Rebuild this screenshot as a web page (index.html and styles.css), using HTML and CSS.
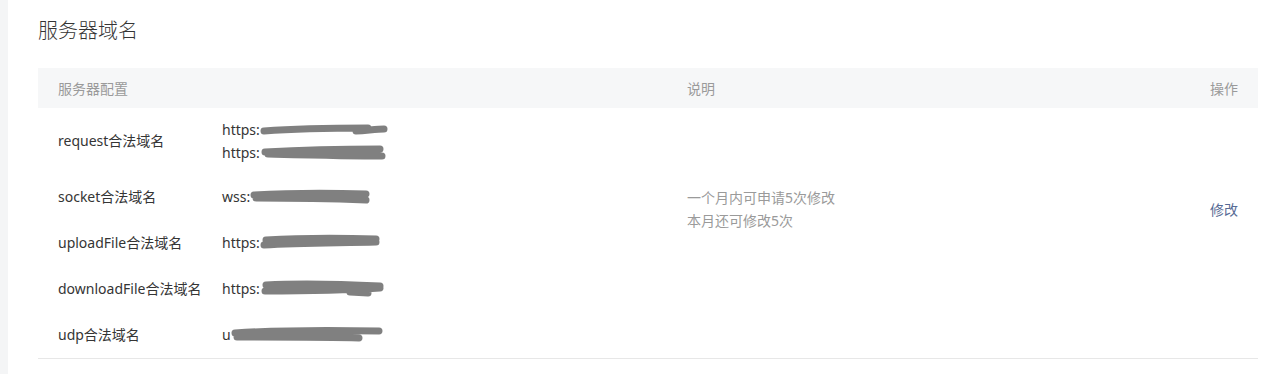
FILE: index.html
```html
<!DOCTYPE html>
<html lang="zh-CN">

<head>
    <meta charset="UTF-8">
    <meta name="viewport" content="width=device-width, initial-scale=1.0">
    <title>服务器域名</title>
    <link rel="stylesheet" href="styles.css">
</head>

<body>

    <div id="page-wrap">
        <main class="card">
            <h2 class="card-title">服务器域名</h2>

            <table class="domain-table">
                <colgroup>
                    <col class="col-label">
                    <col class="col-url">
                    <col class="col-desc">
                    <col class="col-op">
                </colgroup>
                <thead>
                    <tr>
                        <th colspan="2">服务器配置</th>
                        <th>说明</th>
                        <th class="op">操作</th>
                    </tr>
                </thead>
                <tbody>
                    <tr class="row-multi">
                        <td class="label">request合法域名</td>
                        <td class="url">
                            <div>https:<svg class="mask" width="130" height="16" viewBox="0 0 130 16"><path d="M4 10 C30 8 70 7 108 7 M96 10 C110 9 118 8 124 8" /></svg></div>
                            <div>https:<svg class="mask" width="130" height="18" viewBox="0 0 130 18"><path d="M5 9 C40 7 80 6 120 6 M8 11 C50 12 90 13 122 13" /></svg></div>
                        </td>
                        <td class="desc" rowspan="5">
                            一个月内可申请5次修改<br>
                            本月还可修改5次
                        </td>
                        <td class="op" rowspan="5"><a href="#">修改</a></td>
                    </tr>
                    <tr>
                        <td class="label">socket合法域名</td>
                        <td class="url">wss:<svg class="mask" width="124" height="16" viewBox="0 0 124 16"><path d="M4 7 C40 5 80 5 116 6 M6 10 C50 10 90 11 116 12" /></svg></td>
                    </tr>
                    <tr>
                        <td class="label">uploadFile合法域名</td>
                        <td class="url">https:<svg class="mask" width="124" height="18" viewBox="0 0 124 18"><path d="M6 7 C40 5 80 5 116 6 M4 12 C40 10 80 10 116 9" /></svg></td>
                    </tr>
                    <tr>
                        <td class="label">downloadFile合法域名</td>
                        <td class="url">https:<svg class="mask" width="128" height="18" viewBox="0 0 128 18"><path d="M6 6 C40 4 80 5 120 7 M5 12 C50 12 90 11 120 9 M90 13 L108 14" /></svg></td>
                    </tr>
                    <tr>
                        <td class="label">udp合法域名</td>
                        <td class="url">u<svg class="mask" width="156" height="18" viewBox="0 0 156 18"><path d="M4 8 C50 5 100 5 148 6 M6 12 C50 12 100 12 128 13" /></svg></td>
                    </tr>
                </tbody>
            </table>
        </main>
    </div>

</body>

</html>
```

FILE: styles.css
```css
body {
    font-family: "Noto Sans", "Noto Sans CJK SC", sans-serif;
    margin: 0;
    padding: 0;
    background-color: #f4f5f6;
}

#page-wrap {
    padding-left: 8px;
}

.card {
    display: block;
    background-color: #fff;
    min-height: 100vh;
    padding: 17px 24px 0 30px;
    box-sizing: border-box;
}

.card-title {
    margin: 0 0 23px;
    font-size: 20px;
    line-height: 28px;
    font-weight: 300;
    color: #353535;
}

.domain-table {
    width: 100%;
    table-layout: fixed;
    border-collapse: collapse;
    font-size: 14px;
    color: #353535;
    border-bottom: 1px solid #e7e7e7;
}

.col-label {
    width: 184px;
}

.col-url {
    width: 465px;
}

.col-op {
    width: 100px;
}

.domain-table th {
    height: 40px;
    padding: 0;
    text-align: left;
    font-weight: normal;
    color: #9a9a9a;
    background-color: #f6f7f8;
}

.domain-table th:first-child {
    padding-left: 20px;
}

.domain-table td {
    padding: 12px 0;
    line-height: 22px;
    vertical-align: middle;
}

.domain-table .row-multi td {
    padding: 10px 0;
}

.domain-table td.label {
    padding-left: 20px;
    white-space: nowrap;
}

.row-multi .url div {
    line-height: 23px;
}

.mask {
    vertical-align: middle;
    margin-top: -4px;
}

.mask path {
    fill: none;
    stroke: #808080;
    stroke-width: 7;
    stroke-linecap: round;
}

.domain-table td.desc {
    vertical-align: top;
    padding-top: 78px;
    line-height: 23px;
    color: #9a9a9a;
}

.domain-table .op {
    text-align: right;
    padding-right: 20px;
}

.domain-table td.op {
    vertical-align: top;
    padding: 91px 20px 0 0;
}

.op a {
    color: #576b95;
    text-decoration: none;
}
```
